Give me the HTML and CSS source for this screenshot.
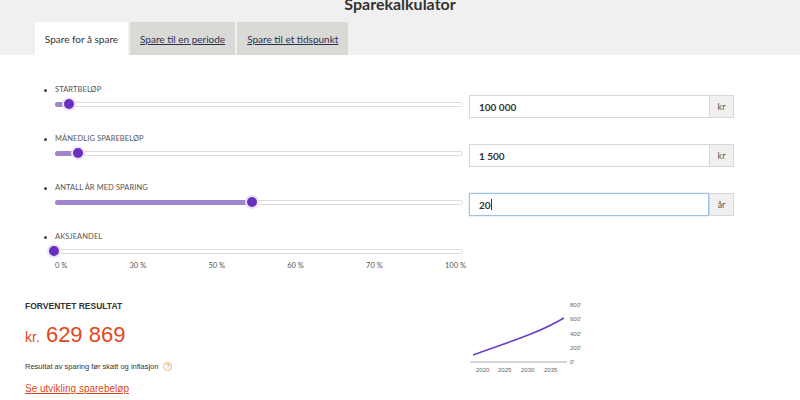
FILE: index.html
```html
<!DOCTYPE html>
<html lang="no">
<head>
<meta charset="utf-8">
<title>Sparekalkulator</title>
<link rel="stylesheet" href="styles.css">
</head>
<body>
<header class="top">
  <h1 class="title">Sparekalkulator</h1>
  <nav class="tabs">
    <span class="tab tab-active">Spare for å spare</span>
    <a class="tab" href="#">Spare til en periode</a>
    <a class="tab" href="#">Spare til et tidspunkt</a>
  </nav>
</header>

<main class="content">
  <ul class="fields">
    <li class="field">
      <div class="field-left">
        <div class="label">STARTBELØP</div>
        <div class="slider">
          <div class="track"></div>
          <div class="fill" style="width: 14px"></div>
          <div class="thumb" style="left: 14px"></div>
        </div>
      </div>
      <div class="inputgroup">
        <div class="input">100 000</div>
        <div class="addon">kr</div>
      </div>
    </li>
    <li class="field">
      <div class="field-left">
        <div class="label">MÅNEDLIG SPAREBELØP</div>
        <div class="slider">
          <div class="track"></div>
          <div class="fill" style="width: 23px"></div>
          <div class="thumb" style="left: 23px"></div>
        </div>
      </div>
      <div class="inputgroup">
        <div class="input">1 500</div>
        <div class="addon">kr</div>
      </div>
    </li>
    <li class="field">
      <div class="field-left">
        <div class="label">ANTALL ÅR MED SPARING</div>
        <div class="slider">
          <div class="track"></div>
          <div class="fill" style="width: 197px"></div>
          <div class="thumb" style="left: 197px"></div>
        </div>
      </div>
      <div class="inputgroup">
        <div class="input input-focus">20<span class="caret"></span></div>
        <div class="addon">år</div>
      </div>
    </li>
    <li class="field">
      <div class="field-left">
        <div class="label">AKSJEANDEL</div>
        <div class="slider">
          <div class="track"></div>
          <div class="thumb" style="left: -1px"></div>
        </div>
        <div class="ticks">
          <span>0 %</span><span>30 %</span><span>50 %</span><span>60 %</span><span>70 %</span><span>100 %</span>
        </div>
      </div>
    </li>
  </ul>

  <section class="result">
    <div class="result-text">
      <h2 class="result-title">FORVENTET RESULTAT</h2>
      <div class="amount"><span class="cur">kr.</span> 629 869</div>
      <p class="note">Resultat av sparing før skatt og inflasjon <span class="help">?</span></p>
      <a class="more" href="#">Se utvikling sparebeløp</a>
    </div>
    <svg class="chart" width="130" height="80" viewBox="0 0 130 80">
      <line x1="5" y1="65" x2="102" y2="65" stroke="#aaa" stroke-width="1"/>
      <path d="M8 58 C 40 46, 70 38, 99 21" fill="none" stroke="#6a3fc0" stroke-width="1.5"/>
      <text x="105" y="10" class="ax">800'</text>
      <text x="105" y="24" class="ax">600'</text>
      <text x="105" y="39" class="ax">400'</text>
      <text x="105" y="53" class="ax">200'</text>
      <text x="105" y="67" class="ax">0'</text>
      <text x="11" y="75" class="ax">2020</text>
      <text x="33" y="75" class="ax">2025</text>
      <text x="56" y="75" class="ax">2030</text>
      <text x="79" y="75" class="ax">2035</text>
    </svg>
  </section>
</main>
</body>
</html>
```

FILE: styles.css
```css
* { box-sizing: border-box; }

body {
  margin: 0;
  background: #ffffff;
  font-family: "Lato", "Liberation Sans", sans-serif;
  color: #333;
  overflow: hidden;
}

.top {
  display: flow-root;
  background: #f0f0f0;
  height: 55px;
}

.title {
  margin: -6px 0 0;
  font-size: 16px;
  line-height: 20px;
  font-weight: 700;
  text-align: center;
  color: #333;
}

.tabs {
  display: flex;
  gap: 2px;
  margin: 8px 0 0 35px;
}

.tab {
  display: flex;
  align-items: center;
  justify-content: center;
  height: 33px;
  padding: 0 10px;
  font-size: 10px;
  white-space: nowrap;
  background: #d9d9d6;
  color: #2e3050;
  text-decoration: underline;
}

.tab-active {
  background: #ffffff;
  color: #333;
  text-decoration: none;
  width: 93px;
  padding: 0;
}

.content { padding: 30px 0 0 0; }

.fields {
  list-style: none;
  margin: 0;
  padding: 0 0 0 55px;
}

.field {
  position: relative;
  display: flex;
  gap: 6px;
  height: 49px;
}

.field::before {
  content: "";
  position: absolute;
  left: -11px;
  top: 4px;
  width: 3px;
  height: 3px;
  border-radius: 50%;
  background: #444;
}

.field-left { width: 408px; }

.label {
  font-size: 7.5px;
  line-height: 10px;
  color: #555;
  letter-spacing: 0.1px;
}

.slider {
  position: relative;
  height: 18px;
}

.track {
  position: absolute;
  left: 0;
  right: 0;
  top: 7px;
  height: 5px;
  border: 1px solid #dcdcdc;
  border-radius: 3px;
  background: #fff;
}

.fill {
  position: absolute;
  left: 0;
  top: 7px;
  height: 5px;
  border-radius: 3px;
  background: #a184cf;
}

.thumb {
  position: absolute;
  top: 2px;
  width: 14px;
  height: 14px;
  margin-left: -7px;
  border-radius: 50%;
  background: #6a2fbf;
  border: 2px solid #ece4f6;
}

.ticks {
  display: flex;
  justify-content: space-between;
  width: 411px;
  font-size: 7.5px;
  line-height: 10px;
  color: #555;
  margin-top: 1px;
}

.inputgroup {
  display: flex;
  margin-top: 10px;
  height: 23px;
}

.input {
  width: 240px;
  border: 1px solid #d8d8d8;
  border-right: none;
  padding-left: 9px;
  font-size: 10px;
  font-weight: 700;
  color: #333;
  display: flex;
  align-items: center;
}

.input-focus {
  border: 1px solid #9cc3e6;
  box-shadow: 0 0 2px #b9d5ee;
}

.caret {
  display: inline-block;
  width: 1px;
  height: 11px;
  background: #333;
}

.addon {
  width: 25px;
  background: #f0f0f0;
  border: 1px solid #d8d8d8;
  display: flex;
  align-items: center;
  justify-content: center;
  font-size: 9px;
  color: #555;
}

.result {
  display: flex;
  align-items: flex-start;
  padding: 19px 0 0 25px;
}

.result-text {
  width: 440px;
  font-family: "Liberation Sans", Arial, sans-serif;
}

.result-title {
  margin: 0;
  font-size: 8.5px;
  line-height: 12px;
  font-weight: 700;
  color: #333;
}

.amount {
  margin-top: 10px;
  font-size: 22px;
  line-height: 26px;
  color: #e0481c;
}
.cur { font-size: 14px; }

.note {
  margin: 11px 0 0;
  font-size: 7.5px;
  line-height: 12px;
  color: #333;
}

.help {
  display: inline-flex;
  align-items: center;
  justify-content: center;
  width: 9px;
  height: 9px;
  margin-left: 3px;
  border: 1px solid #f0b48a;
  border-radius: 50%;
  font-size: 6px;
  color: #e0823c;
  vertical-align: 1px;
}

.more {
  display: inline-block;
  margin-top: 10px;
  font-size: 10px;
  color: #e0481c;
  text-decoration: underline;
}

.chart {
  margin-top: -3px;
}

.ax {
  font-family: "Liberation Sans", Arial, sans-serif;
  font-size: 6px;
  fill: #666;
}
```
